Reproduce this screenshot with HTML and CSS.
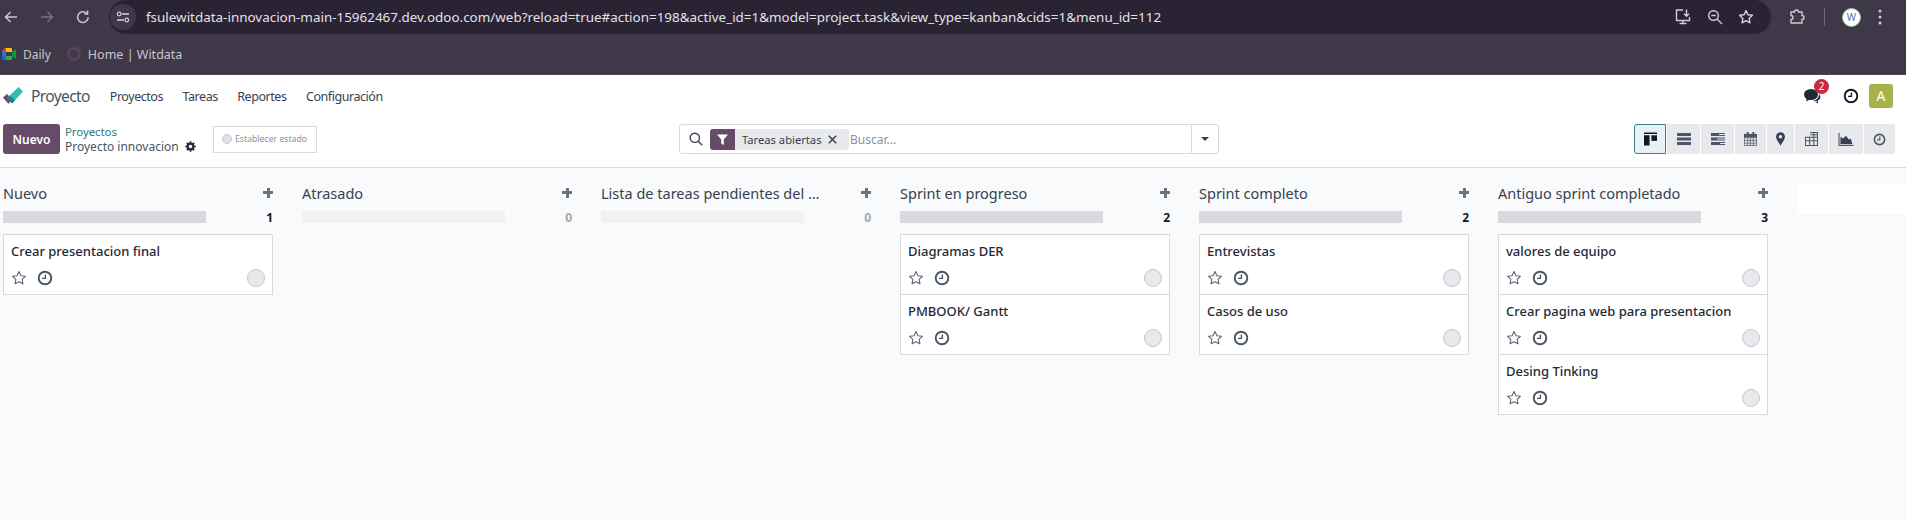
FILE: index.html
```html
<!DOCTYPE html>
<html lang="es">
  <head>
    <meta charset="UTF-8" />
    <title>Proyecto innovacion - Tareas</title>
    <link rel="stylesheet" href="styles.css">
  </head>
  <body>
    <svg class="sprites" width="0" height="0">
      <symbol id="star" viewBox="0 0 16 16">
        <path d="M8 1.600l1.950 4.100 4.450.6-3.250 3.100.8 4.450L8 11.700l-3.950 2.150.8-4.450L1.600 6.300l4.450-.6z" fill="none" stroke="currentColor" stroke-width="1.100" stroke-linejoin="round" />
      </symbol>
      <symbol id="clock" viewBox="0 0 16 16">
        <circle cx="8" cy="8" r="6.300" fill="none" stroke="currentColor" stroke-width="1.900" />
        <path d="M8.400 4.400v4H5" fill="none" stroke="currentColor" stroke-width="1.400" />
      </symbol>
    </svg>

    <header class="chrome-bar">
      <div class="chrome-nav">
        <svg width="16" height="16" viewBox="0 0 16 16"><path d="M14 8H3M7.500 3L2.500 8l5 5" fill="none" stroke="#c9c5cf" stroke-width="1.500" /></svg>
        <svg class="dim" width="16" height="16" viewBox="0 0 16 16"><path d="M2 8h11M8.500 3l5 5-5 5" fill="none" stroke="#767180" stroke-width="1.500" /></svg>
        <svg width="16" height="16" viewBox="0 0 16 16"><path d="M13.200 8.200a5.300 5.300 0 1 1-1.400-3.700M12.600 1.600v3.300H9.300" fill="none" stroke="#c9c5cf" stroke-width="1.500" /></svg>
      </div>
      <div class="omnibox">
        <span class="site-info">
          <svg width="14" height="14" viewBox="0 0 14 14"><path d="M6 4h7M1 10h7" stroke="#d5d2da" stroke-width="1.300" fill="none" /><circle cx="3.200" cy="4" r="1.800" fill="none" stroke="#d5d2da" stroke-width="1.200" /><circle cx="10.800" cy="10" r="1.800" fill="none" stroke="#d5d2da" stroke-width="1.200" /></svg>
        </span>
        <span class="url">fsulewitdata-innovacion-main-15962467.dev.odoo.com/web?reload=true#action=198&amp;active_id=1&amp;model=project.task&amp;view_type=kanban&amp;cids=1&amp;menu_id=112</span>
        <span class="omni-actions">
          <svg width="18" height="18" viewBox="0 0 18 18"><path d="M9 2H2.500v10.500h13V9M5.500 15.500h7M9 12.500v3M12.500 1.500v6.500M10 5.800l2.500 2.500L15 5.800" fill="none" stroke="#cfccd4" stroke-width="1.400" /></svg>
          <svg width="16" height="16" viewBox="0 0 16 16"><circle cx="6.500" cy="6.500" r="4.800" fill="none" stroke="#cfccd4" stroke-width="1.400" /><path d="M10 10l5 5M4.300 6.500h4.400" stroke="#cfccd4" stroke-width="1.400" /></svg>
          <svg width="16" height="16" viewBox="0 0 16 16"><path d="M8 1.600l1.950 4.100 4.450.6-3.250 3.100.8 4.450L8 11.700l-3.950 2.150.8-4.450L1.600 6.300l4.450-.6z" fill="none" stroke="#d5d2da" stroke-width="1.400" stroke-linejoin="round" /></svg>
        </span>
      </div>
      <div class="chrome-end">
        <svg class="ext" width="18" height="18" viewBox="0 0 18 18"><path d="M3 4h3.500a2 2 0 0 1 4 0H14v3.500a2 2 0 0 1 0 4V15H3v-3.500a2 2 0 0 0 0-4z" fill="none" stroke="#cfccd4" stroke-width="1.400" /></svg>
        <span class="chrome-sep"></span>
        <span class="profile">W</span>
        <svg class="menu-dots" width="4" height="16" viewBox="0 0 4 16"><circle cx="2" cy="2" r="1.500" fill="#cfccd4" /><circle cx="2" cy="8" r="1.500" fill="#cfccd4" /><circle cx="2" cy="14" r="1.500" fill="#cfccd4" /></svg>
      </div>
    </header>

    <div class="bookmarks">
      <a class="bookmark">
        <svg width="15" height="12" viewBox="0 0 15 12"><path d="M0 3l3-3h1v4H0z" fill="#ea4335" /><path d="M0 4h4v4H0z" fill="#1a73e8" /><path d="M0 8h4v4H1.500A1.500 1.500 0 0 1 0 10.500z" fill="#1967d2" /><path d="M4 8h6v3a1 1 0 0 1-1 1H4z" fill="#34a853" /><path d="M4 0h5a1 1 0 0 1 1 1v3H4z" fill="#fbbc04" /><path d="M10 4l4-3v10l-4-3z" fill="#00a13a" /><path d="M4 4h6v4H4z" fill="#3f3949" /></svg>
        Daily
      </a>
      <a class="bookmark bookmark-home"><span class="ring"></span>Home | Witdata</a>
    </div>

    <nav class="navbar">
      <svg class="logo" width="20" height="18" viewBox="0 0 20 18"><path d="M0 10.500L4 7l5 5-3.500 5z" fill="#6b4a6b" /><path d="M4 11L15.500 0 20 4.500 9 16.500z" fill="#2ebcb4" /><path d="M4.500 11.500L9 16.500l3-3.300-5-4.500z" fill="#1f7f86" /></svg>
      <span class="brand">Proyecto</span>
      <a class="nav-item">Proyectos</a>
      <a class="nav-item">Tareas</a>
      <a class="nav-item">Reportes</a>
      <a class="nav-item">Configuración</a>
      <div class="systray">
        <span class="chat">
          <svg width="18" height="16" viewBox="0 0 18 16"><ellipse cx="7" cy="6.500" rx="7" ry="5.500" fill="#1f2937" /><path d="M3 10l-1 3.500 4-2z" fill="#1f2937" /><path d="M12 14.500l2 1v-3z" fill="#1f2937" /><path d="M9 13c3 .6 6 0 7-2.500 1-2-.2-3.500-1-4.500 0 3.500-2 6-6 7z" fill="#1f2937" /></svg>
          <span class="badge">2</span>
        </span>
        <svg class="tray-clock" width="16" height="16"><use href="#clock" /></svg>
        <span class="avatar">A</span>
      </div>
    </nav>

    <section class="control-panel">
      <div class="cp-left">
        <button class="btn-new">Nuevo</button>
        <div class="crumbs">
          <a class="crumb-link">Proyectos</a>
          <span class="crumb-current">Proyecto innovacion
            <svg width="11" height="11" viewBox="0 0 12 12"><circle cx="6" cy="6" r="3.200" fill="none" stroke="#1f2937" stroke-width="2.400" /><path d="M6 .3v2.200M6 9.500v2.200M.3 6h2.200M9.500 6h2.200M2 2l1.500 1.500M8.500 8.500L10 10M2 10l1.500-1.500M8.500 3.500L10 2" stroke="#1f2937" stroke-width="1.800" /></svg>
          </span>
        </div>
        <div class="status-box"><span class="status-dot"></span>Establecer estado</div>
      </div>
      <div class="search">
        <svg class="search-icon" width="14" height="14" viewBox="0 0 14 14"><circle cx="5.800" cy="5.800" r="4.600" fill="none" stroke="#374151" stroke-width="1.400" /><path d="M9.200 9.200l4 4" stroke="#374151" stroke-width="1.500" /></svg>
        <span class="facet">
          <span class="facet-icon"><svg width="11" height="11" viewBox="0 0 11 11"><path d="M0 .5h11L6.800 5.500V11L4.200 9.500v-4z" fill="#fff" /></svg></span>
          <span class="facet-label">Tareas abiertas</span>
          <svg class="facet-x" width="9" height="9" viewBox="0 0 9 9"><path d="M.8.800l7.400 7.400M8.200.800L.8 8.200" stroke="#374151" stroke-width="1.500" /></svg>
        </span>
        <span class="search-input">Buscar...</span>
        <span class="search-drop"><span class="caret"></span></span>
      </div>
      <div class="views">
        <button class="view active w32">
          <svg width="13" height="14" viewBox="0 0 14 14"><path d="M0 0h14v1.500H0zM0 3h6v11H0z" fill="#111827" /><path d="M8 3h6v6H8z" fill="#111827" /></svg>
        </button>
        <button class="view w33">
          <svg width="14" height="12" viewBox="0 0 14 12"><path d="M0 0h14v3H0zM0 4.500h14v3H0zM0 9h14v3H0z" fill="#4b5563" /></svg>
        </button>
        <button class="view w33">
          <svg width="14" height="12" viewBox="0 0 14 12"><path d="M0 0h14v3H0zM0 4.500h14v3H0zM0 9h14v3H0z" fill="#4b5563" /><path d="M8 1h6v1H8zM6 5.500h8v1H6zM9 10h5v1H9z" fill="#e7e9ed" /></svg>
        </button>
        <button class="view w31">
          <svg width="13" height="14" viewBox="0 0 14 15"><path d="M.5 2.500h13v12H.5zM.5 6h13M.5 9h13M.5 12h13M4 6v8.500M7 6v8.500M10 6v8.500" fill="none" stroke="#6b7280" stroke-width="1" /><path d="M0 2h14v3.500H0zM3 0h2v3H3zM9 0h2v3H9z" fill="#4b5563" /></svg>
        </button>
        <button class="view w27">
          <svg width="9" height="14" viewBox="0 0 10 15"><path fill-rule="evenodd" d="M5 0a5 5 0 0 1 5 5c0 3-3 6-5 10-2-4-5-7-5-10a5 5 0 0 1 5-5zm0 3a2 2 0 1 0 0 4 2 2 0 0 0 0-4z" fill="#374151" /></svg>
        </button>
        <button class="view w33">
          <svg width="13" height="14" viewBox="0 0 14 15"><path d="M5.500.5h8v14H.5v-9h13M.5 9.500h13M5 5v9.500M9.500.5v14M5.500 3h8" fill="none" stroke="#4b5563" stroke-width="1.100" /></svg>
        </button>
        <button class="view w34">
          <svg width="16" height="13" viewBox="0 0 16 14"><path d="M.5 0v13.500H16" fill="none" stroke="#4b5563" stroke-width="1.200" /><path d="M2 12V4l3 2 3-3 3 4 2-1 2 6z" fill="#374151" /></svg>
        </button>
        <button class="view w31">
          <svg width="13" height="13"><use href="#clock" /></svg>
        </button>
      </div>
    </section>

    <main class="kanban">
      <div class="column">
        <div class="col-head"><span class="col-title">Nuevo</span><span class="plus"></span></div>
        <div class="col-progress"><span class="bar"></span><b class="count">1</b></div>
        <div class="cards">
          <article class="card">
            <h3>Crear presentacion final</h3>
            <div class="card-foot">
              <svg class="star" width="16" height="16"><use href="#star" /></svg>
              <svg class="clock" width="16" height="16"><use href="#clock" /></svg>
              <span class="assignee"></span>
            </div>
          </article>
        </div>
      </div>

      <div class="column empty">
        <div class="col-head"><span class="col-title">Atrasado</span><span class="plus"></span></div>
        <div class="col-progress"><span class="bar"></span><b class="count">0</b></div>
      </div>

      <div class="column empty">
        <div class="col-head"><span class="col-title">Lista de tareas pendientes del sprint</span><span class="plus"></span></div>
        <div class="col-progress"><span class="bar"></span><b class="count">0</b></div>
      </div>

      <div class="column">
        <div class="col-head"><span class="col-title">Sprint en progreso</span><span class="plus"></span></div>
        <div class="col-progress"><span class="bar"></span><b class="count">2</b></div>
        <div class="cards">
          <article class="card">
            <h3>Diagramas DER</h3>
            <div class="card-foot">
              <svg class="star" width="16" height="16"><use href="#star" /></svg>
              <svg class="clock" width="16" height="16"><use href="#clock" /></svg>
              <span class="assignee"></span>
            </div>
          </article>
          <article class="card">
            <h3>PMBOOK/ Gantt</h3>
            <div class="card-foot">
              <svg class="star" width="16" height="16"><use href="#star" /></svg>
              <svg class="clock" width="16" height="16"><use href="#clock" /></svg>
              <span class="assignee"></span>
            </div>
          </article>
        </div>
      </div>

      <div class="column">
        <div class="col-head"><span class="col-title">Sprint completo</span><span class="plus"></span></div>
        <div class="col-progress"><span class="bar"></span><b class="count">2</b></div>
        <div class="cards">
          <article class="card">
            <h3>Entrevistas</h3>
            <div class="card-foot">
              <svg class="star" width="16" height="16"><use href="#star" /></svg>
              <svg class="clock" width="16" height="16"><use href="#clock" /></svg>
              <span class="assignee"></span>
            </div>
          </article>
          <article class="card">
            <h3>Casos de uso</h3>
            <div class="card-foot">
              <svg class="star" width="16" height="16"><use href="#star" /></svg>
              <svg class="clock" width="16" height="16"><use href="#clock" /></svg>
              <span class="assignee"></span>
            </div>
          </article>
        </div>
      </div>

      <div class="column">
        <div class="col-head"><span class="col-title">Antiguo sprint completado</span><span class="plus"></span></div>
        <div class="col-progress"><span class="bar"></span><b class="count">3</b></div>
        <div class="cards">
          <article class="card">
            <h3>valores de equipo</h3>
            <div class="card-foot">
              <svg class="star" width="16" height="16"><use href="#star" /></svg>
              <svg class="clock" width="16" height="16"><use href="#clock" /></svg>
              <span class="assignee"></span>
            </div>
          </article>
          <article class="card">
            <h3>Crear pagina web para presentacion</h3>
            <div class="card-foot">
              <svg class="star" width="16" height="16"><use href="#star" /></svg>
              <svg class="clock" width="16" height="16"><use href="#clock" /></svg>
              <span class="assignee"></span>
            </div>
          </article>
          <article class="card">
            <h3>Desing Tinking</h3>
            <div class="card-foot">
              <svg class="star" width="16" height="16"><use href="#star" /></svg>
              <svg class="clock" width="16" height="16"><use href="#clock" /></svg>
              <span class="assignee"></span>
            </div>
          </article>
        </div>
      </div>

      <div class="ghost-column"></div>
    </main>
  </body>
</html>
```

FILE: styles.css
```css
* {
  margin: 0;
  padding: 0;
  box-sizing: border-box;
}
html,
body {
  height: 100%;
}
body {
  display: flex;
  flex-direction: column;
  overflow: hidden;
  font-family: "Noto Sans", "Open Sans", sans-serif;
  font-size: 13px;
  color: #374151;
  background-color: #fff;
}
button {
  font-family: inherit;
  border: none;
  cursor: pointer;
}
.sprites {
  position: absolute;
}

/* browser chrome */
.chrome-bar {
  height: 34px;
  display: flex;
  align-items: center;
  background-color: #3e3848;
}
.chrome-nav {
  width: 109px;
  display: flex;
  align-items: center;
  gap: 20px;
  padding-left: 3px;
}
.omnibox {
  width: 1662px;
  height: 34px;
  display: flex;
  align-items: center;
  background-color: #292334;
  border-radius: 17px;
}
.site-info {
  width: 26px;
  height: 26px;
  margin-left: 1px;
  border-radius: 50%;
  background-color: #3f3849;
  display: flex;
  align-items: center;
  justify-content: center;
}
.url {
  margin-left: 10px;
  flex: 1;
  font-size: 13.43px;
  color: #e3e1e7;
  white-space: nowrap;
}
.omni-actions {
  display: flex;
  align-items: center;
  gap: 15px;
  padding-right: 17px;
}
.chrome-end {
  flex: 1;
  display: flex;
  align-items: center;
  padding-left: 17px;
}
.chrome-sep {
  width: 1px;
  height: 18px;
  margin-left: 18px;
  background-color: #6c6676;
}
.profile {
  width: 19px;
  height: 19px;
  margin-left: 17px;
  border-radius: 50%;
  background-color: #fff;
  border: 1px solid #9fc5a8;
  color: #4a78a8;
  font-size: 10px;
  line-height: 17px;
  text-align: center;
}
.menu-dots {
  margin-left: 17px;
}
.bookmarks {
  height: 41px;
  display: flex;
  align-items: center;
  background-color: #3f3949;
  border-bottom: 1px solid #4c4656;
  padding: 0 0 0 2px;
  gap: 16px;
}
.bookmark {
  display: flex;
  align-items: center;
  gap: 6px;
  font-size: 12px;
  color: #c9c5cf;
}
.bookmark-home {
  gap: 7px;
  font-size: 12.5px;
}
.ring {
  width: 14px;
  height: 14px;
  border-radius: 50%;
  border: 3px solid #5a4358;
}

/* odoo navbar */
.navbar {
  height: 44px;
  display: flex;
  align-items: center;
  padding: 0 13px 2px 3px;
}
.logo {
  margin-right: 8px;
}
.brand {
  font-size: 15.5px;
  letter-spacing: -0.6px;
  color: #4b5563;
  margin-right: 20px;
}
.nav-item {
  font-size: 12.5px;
  letter-spacing: -0.45px;
  margin-right: 19.5px;
  color: #374151;
}
.systray {
  margin-left: auto;
  display: flex;
  align-items: center;
}
.chat {
  position: relative;
  display: flex;
  left: 2px;
}
.badge {
  position: absolute;
  top: -9px;
  left: 10px;
  width: 15px;
  height: 15px;
  border-radius: 50%;
  background-color: #c9283e;
  color: #fff;
  font-size: 10px;
  line-height: 15px;
  text-align: center;
}
.tray-clock {
  margin-left: 23px;
  color: #111827;
}
.avatar {
  width: 24px;
  height: 24px;
  margin-left: 10px;
  border-radius: 3px;
  background-color: #a9b14a;
  color: #fff;
  font-size: 14px;
  line-height: 24px;
  text-align: center;
}

/* control panel */
.control-panel {
  height: 49px;
  display: flex;
  align-items: flex-start;
  padding: 5px 11px 0 3px;
  border-bottom: 1px solid #d8dadd;
}
.cp-left {
  width: 676px;
  display: flex;
  align-items: center;
}
.btn-new {
  width: 57px;
  height: 30px;
  border-radius: 3px;
  background-color: #664c68;
  color: #fff;
  font-weight: 600;
  font-size: 12px;
}
.crumbs {
  width: 148px;
  margin-left: 5px;
  display: flex;
  flex-direction: column;
  font-size: 12px;
  line-height: 15px;
}
.crumb-link {
  font-size: 11.5px;
  letter-spacing: -0.1px;
  color: #2f7a80;
}
.crumb-current {
  display: flex;
  align-items: center;
  gap: 6px;
  white-space: nowrap;
  color: #4b5563;
}
.status-box {
  width: 104px;
  height: 27px;
  display: flex;
  align-items: center;
  gap: 3px;
  padding-left: 8px;
  border: 1px solid #d8dadd;
  font-size: 8.7px;
  color: #8b929c;
}
.status-dot {
  width: 10px;
  height: 10px;
  border-radius: 50%;
  background-color: #e0e2e6;
  border: 1px solid #c5c8cd;
}
.search {
  width: 540px;
  height: 30px;
  display: flex;
  align-items: center;
  border: 1px solid #d8dadd;
  border-radius: 3px;
}
.search-icon {
  margin-left: 9px;
}
.facet {
  height: 21px;
  margin-left: 7px;
  display: flex;
  align-items: center;
  border-radius: 3px;
  background-color: #e7e9ed;
}
.facet-icon {
  width: 25px;
  height: 21px;
  border-radius: 3px 0 0 3px;
  background-color: #664c68;
  display: flex;
  align-items: center;
  justify-content: center;
}
.facet-label {
  width: 84px;
  padding-left: 7px;
  font-size: 11.2px;
  white-space: nowrap;
}
.facet-x {
  margin: 0 12px 0 9px;
}
.search-input {
  margin-left: 1px;
  flex: 1;
  font-size: 12px;
  color: #8b929c;
}
.search-drop {
  width: 27px;
  height: 28px;
  border-left: 1px solid #d8dadd;
  display: flex;
  align-items: center;
  justify-content: center;
}
.caret {
  border-top: 4px solid #374151;
  border-left: 4px solid transparent;
  border-right: 4px solid transparent;
}
.views {
  margin-left: auto;
  height: 30px;
  display: flex;
  gap: 1px;
}
.view {
  height: 30px;
  background-color: #e7e9ed;
  color: #4b5563;
  display: flex;
  align-items: center;
  justify-content: center;
}
.views .view:first-child {
  border-radius: 3px 0 0 3px;
}
.views .view:last-child {
  border-radius: 0 3px 3px 0;
}
.view.active {
  background-color: #e6f2f3;
  border: 1px solid #3f7f86;
}
.w27 { width: 27px; }
.w31 { width: 31px; }
.w32 { width: 32px; }
.w33 { width: 33px; }
.w34 { width: 34px; }

/* kanban */
.kanban {
  flex: 1;
  display: flex;
  gap: 29px;
  padding: 15px 0 0 3px;
  background-color: #f9fafb;
}
.column {
  width: 270px;
  flex-shrink: 0;
}
.col-head {
  height: 20px;
  display: flex;
  align-items: center;
  justify-content: space-between;
}
.col-title {
  max-width: 225px;
  font-size: 14.5px;
  color: #374151;
  white-space: nowrap;
  overflow: hidden;
  text-overflow: ellipsis;
}
.plus {
  width: 10px;
  height: 10px;
  margin: -1px 0 0 0;
  background:
    linear-gradient(#6b7280, #6b7280) center / 10px 3px no-repeat,
    linear-gradient(#6b7280, #6b7280) center / 3px 10px no-repeat;
}
.col-progress {
  margin-top: 8px;
  height: 12px;
  display: flex;
  align-items: center;
  justify-content: space-between;
}
.bar {
  width: 203px;
  height: 12px;
  background-color: #d8d9dc;
}
.count {
  font-size: 12px;
  color: #111827;
}
.empty .bar {
  background-color: #f1f2f3;
}
.empty .count {
  color: #a3a7ad;
}
.cards {
  margin-top: 11px;
  border: 1px solid #d8dadd;
  background-color: #fff;
}
.card {
  height: 60px;
  padding: 7px 7px 0 7px;
  border-bottom: 1px solid #d8dadd;
}
.card:last-child {
  height: 59px;
  border-bottom: none;
}
.card h3 {
  font-size: 13px;
  line-height: 18px;
  font-weight: 500;
  color: #1f2937;
  white-space: nowrap;
}
.card-foot {
  margin-top: 9px;
  display: flex;
  align-items: center;
}
.star {
  color: #6b5f78;
}
.clock {
  margin-left: 10px;
  color: #4b5563;
}
.assignee {
  width: 18px;
  height: 18px;
  margin-left: auto;
  border-radius: 50%;
  background-color: #e7e9ed;
  border: 1px solid #c5c8cd;
}
.ghost-column {
  flex: 1;
  height: 30px;
  margin-top: 1px;
  background-color: #fff;
  border-radius: 3px 0 0 3px;
}
```
